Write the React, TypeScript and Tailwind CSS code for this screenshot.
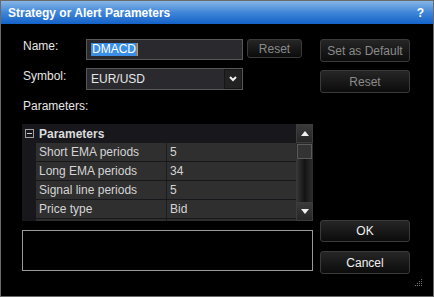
import React from 'react';

const ROWS = [
  { name: 'Short EMA periods', value: '5' },
  { name: 'Long EMA periods', value: '34' },
  { name: 'Signal line periods', value: '5' },
  { name: 'Price type', value: 'Bid' },
  { name: '', value: '' },
];

function DarkButton({ label, disabled, className }: { label: string; disabled?: boolean; className: string }) {
  return (
    <button
      type="button"
      className={`flex items-center justify-center rounded-[3px] border border-[#3a3a3a] bg-gradient-to-b from-[#262626] to-[#0c0c0c] text-[12px] leading-[14px] ${
        disabled ? 'text-[#8a8a8a]' : 'text-[#f0f0f0]'
      } ${className}`}
    >
      {label}
    </button>
  );
}

function ScrollArrow({ up }: { up?: boolean }) {
  return (
    <div className="flex h-[19px] w-full items-center justify-center border border-[#3c3c3c] bg-gradient-to-b from-[#3a3a3a] to-[#262626]">
      <svg width="8" height="5" viewBox="0 0 8 5">
        {up ? <path d="M4 0 L8 5 L0 5 Z" fill="#f0f0f0" /> : <path d="M0 0 L8 0 L4 5 Z" fill="#f0f0f0" />}
      </svg>
    </div>
  );
}

export default function App() {
  return (
    <div className="relative flex h-[297px] w-[434px] flex-col overflow-hidden border border-[#6a6a6a] bg-black font-['Liberation_Sans',Arial,sans-serif]">
      {/* Title bar */}
      <div className="flex h-[23px] shrink-0 items-center justify-between bg-gradient-to-b from-[#86b6e6] via-[#3f86d8] to-[#1262c8] pl-[7px] pr-[9px]">
        <span className="text-[12px] font-bold leading-[14px] text-white">Strategy or Alert Parameters</span>
        <span className="text-[12px] font-bold leading-[14px] text-white">?</span>
      </div>

      <div className="flex gap-[7px] pl-[21px] pt-[15px]">
        {/* Left column */}
        <div className="flex w-[291px] flex-col">
          <div className="flex h-[21px] items-start">
            <span className="w-[64px] pl-[1px] text-[12px] leading-[14px] text-[#e6e6e6]">Name:</span>
            <div className="flex h-[21px] w-[157px] items-center border border-[#585858] bg-[#2a2a2e] pl-[4px]">
              <span className="bg-[#3a8ee6] px-[1px] text-[12px] leading-[13px] text-white">DMACD</span>
              <span className="h-[13px] w-[1px] bg-[#ff8a00]" />
            </div>
            <DarkButton label="Reset" disabled className="ml-[4px] h-[19px] w-[55px]" />
          </div>

          <div className="mt-[8px] flex h-[22px] items-start">
            <span className="w-[64px] pl-[1px] pt-[1px] text-[12px] leading-[14px] text-[#e6e6e6]">Symbol:</span>
            <div className="flex h-[22px] w-[157px] items-center justify-between border border-[#585858] bg-[#2a2a2e] pl-[4px]">
              <span className="text-[12px] leading-[14px] text-[#e6e6e6]">EUR/USD</span>
              <div className="flex h-[20px] w-[18px] items-center justify-center border border-[#151515] bg-[#222]">
                <svg width="8" height="6" viewBox="0 0 8 6">
                  <path d="M1 1 L4 4 L7 1" fill="none" stroke="#f0f0f0" strokeWidth="2" />
                </svg>
              </div>
            </div>
          </div>

          <span className="mt-[9px] pl-[1px] text-[12px] leading-[14px] text-[#e6e6e6]">Parameters:</span>

          {/* Property grid */}
          <div className="mt-[11px] flex h-[97px] overflow-hidden bg-[#18181c]">
            <div className="flex w-[274px] flex-col">
              <div className="flex h-[19px] shrink-0 items-center">
                <div className="flex w-[14px] justify-center">
                  <div className="flex h-[9px] w-[9px] items-center justify-center border border-[#a0a0a0]">
                    <div className="h-[1px] w-[5px] bg-[#d0d0d0]" />
                  </div>
                </div>
                <span className="pl-[3px] text-[12px] font-bold leading-[14px] text-[#dcdcdc]">Parameters</span>
              </div>
              {ROWS.map((r, i) => (
                <div key={i} className="flex h-[19px] shrink-0 pl-[14px]">
                  <div className="flex h-[18px] w-[130px] items-center bg-[#2f2f2f] pl-[3px] text-[12px] leading-[14px] text-[#d4d4d4]">
                    {r.name}
                  </div>
                  <div className="h-[18px] w-[1px] bg-[#1c1c1c]" />
                  <div className="flex h-[18px] flex-1 items-center bg-[#2f2f2f] pl-[3px] text-[12px] leading-[14px] text-[#d4d4d4]">
                    {r.value}
                  </div>
                </div>
              ))}
            </div>
            {/* Scrollbar */}
            <div className="flex w-[17px] flex-col bg-[#2a2a2a]">
              <ScrollArrow up />
              <div className="mx-[1px] mt-[1px] h-[15px] border border-[#5a5a5a] bg-[#333]" />
              <div className="flex-1 bg-gradient-to-r from-[#3a3a3a] via-[#141414] to-[#2e2e2e]" />
              <ScrollArrow />
            </div>
          </div>

          <div className="mt-[9px] h-[41px] border border-[#9a9a9a] bg-black" />
        </div>

        {/* Right column */}
        <div className="flex w-[90px] flex-col">
          <DarkButton label="Set as Default" disabled className="h-[23px] w-[90px]" />
          <DarkButton label="Reset" disabled className="mt-[8px] h-[23px] w-[90px]" />
          <DarkButton label="OK" className="mt-[127px] h-[22px] w-[90px]" />
          <DarkButton label="Cancel" className="mt-[9px] h-[23px] w-[90px]" />
        </div>
      </div>

      {/* Resize grip */}
      <svg className="absolute bottom-[10px] right-[11px]" width="7" height="7" viewBox="0 0 7 7">
        <rect x="6" y="0" width="1" height="1" fill="#707070" />
        <rect x="4" y="2" width="1" height="1" fill="#707070" />
        <rect x="6" y="2" width="1" height="1" fill="#707070" />
        <rect x="2" y="4" width="1" height="1" fill="#707070" />
        <rect x="4" y="4" width="1" height="1" fill="#707070" />
        <rect x="6" y="4" width="1" height="1" fill="#707070" />
        <rect x="0" y="6" width="1" height="1" fill="#707070" />
        <rect x="2" y="6" width="1" height="1" fill="#707070" />
        <rect x="4" y="6" width="1" height="1" fill="#707070" />
        <rect x="6" y="6" width="1" height="1" fill="#707070" />
      </svg>
    </div>
  );
}
